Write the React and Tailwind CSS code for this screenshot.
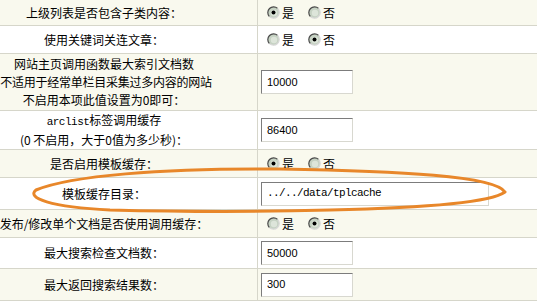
const cream = "bg-[#f9f9ee]"

function Radio({ checked }) {
  return (
    <svg width="13" height="13" viewBox="0 0 13 13" className="shrink-0">
      <circle cx="6.5" cy="6.5" r="5.8" fill="#c6d2c3" />
      <circle cx="7" cy="7" r="3.2" fill="#dde5da" />
      <path d="M 2.4 10.6 A 5.8 5.8 0 0 1 10.6 2.4" fill="none" stroke="#4a4a4a" strokeWidth="1.2" />
      <path d="M 10.6 2.4 A 5.8 5.8 0 0 1 2.4 10.6" fill="none" stroke="#d8d8d8" strokeWidth="1.2" />
      {checked && <circle cx="6.5" cy="6.5" r="2" fill="#000" />}
    </svg>
  )
}

function YesNo({ yes }) {
  return (
    <div className="flex items-center pl-[9px] text-[12px] text-black">
      <Radio checked={yes} />
      <span className="ml-[2px]">是</span>
      <span className="ml-[14px] flex items-center">
        <Radio checked={!yes} />
        <span className="ml-[2px]">否</span>
      </span>
    </div>
  )
}

function TextInput({ value, wide, mono }) {
  return (
    <div className="pl-[3px]">
      <div
        className={`flex items-center h-[24px] bg-white border border-t-[#7c7c7c] border-l-[#7c7c7c] border-b-[#d8d8d0] border-r-[#d8d8d0] pl-[5px] ${wide ? "w-[228px]" : "w-[92px]"}`}
      >
        {mono ? (
          <span className="font-['Liberation_Mono',monospace] text-[11px] tracking-[-0.6px] text-black">{value}</span>
        ) : (
          <span className="font-['Liberation_Sans',Arial,sans-serif] text-[11px] text-black">{value}</span>
        )}
      </div>
    </div>
  )
}

const rows = [
  { h: "h-[26px]", bg: cream, label: ["上级列表是否包含子类内容："], ctl: <YesNo yes /> },
  { h: "h-[28px]", bg: "bg-white", label: ["使用关键词关连文章："], ctl: <YesNo yes={false} /> },
  {
    h: "h-[57px]",
    bg: cream,
    label: [
      "网站主页调用函数最大索引文档数",
      <span key="b" className="inline-block ml-[4px] tracking-[-0.25px]">不适用于经常单栏目采集过多内容的网站</span>,
      "不启用本项此值设置为0即可：",
    ],
    ctl: <TextInput value="10000" />,
  },
  {
    h: "h-[39px]",
    bg: "bg-white",
    label: [
      <span key="a"><span className="font-['Liberation_Mono',monospace] text-[11px] tracking-[-0.5px]">arclist</span>标签调用缓存</span>,
      "(0 不启用，大于0值为多少秒)：",
    ],
    ctl: <TextInput value="86400" />,
  },
  { h: "h-[28px]", bg: cream, label: ["是否启用模板缓存："], ctl: <YesNo yes /> },
  { h: "h-[32px]", bg: "bg-white", label: ["模板缓存目录："], ctl: <TextInput value="../../data/tplcache" wide mono /> },
  { h: "h-[28px]", bg: cream, label: ["发布/修改单个文档是否使用调用缓存："], ctl: <YesNo yes={false} /> },
  { h: "h-[31px]", bg: "bg-white", label: ["最大搜索检查文档数："], ctl: <TextInput value="50000" /> },
  { h: "h-[32px]", bg: cream, label: ["最大返回搜索结果数："], ctl: <TextInput value="300" /> },
]

export default function App() {
  return (
    <div className="relative w-[537px] h-[303px] overflow-hidden bg-white font-['Noto_Sans_CJK_SC','Noto_Sans',sans-serif] text-[12px] text-black">
      {rows.map((r, i) => (
        <div key={i} className={`flex border-b border-[#d6d6ca] ${r.h} ${r.bg}`}>
          <div className="w-[258px] shrink-0 border-r border-[#d6d6ca] flex flex-col justify-center items-center pr-[49px] leading-[18px] whitespace-nowrap">
            {r.label.map((l, j) => (
              <div key={j}>{l}</div>
            ))}
          </div>
          <div className="flex-1 flex items-center">{r.ctl}</div>
        </div>
      ))}

      {/* 手绘的橙色圈 */}
      <svg className="absolute inset-0 pointer-events-none" width="537" height="303" viewBox="0 0 537 303">
        <path
          d="M 505 192 C 495 176, 400 171, 280 169 C 160 168, 70 176, 36 190 C 26 198, 50 207, 110 210 C 190 212, 260 212, 330 210 C 420 208, 490 203, 505 192"
          fill="none"
          stroke="#e8872a"
          strokeWidth="3"
          strokeLinecap="round"
        />
      </svg>
    </div>
  )
}
